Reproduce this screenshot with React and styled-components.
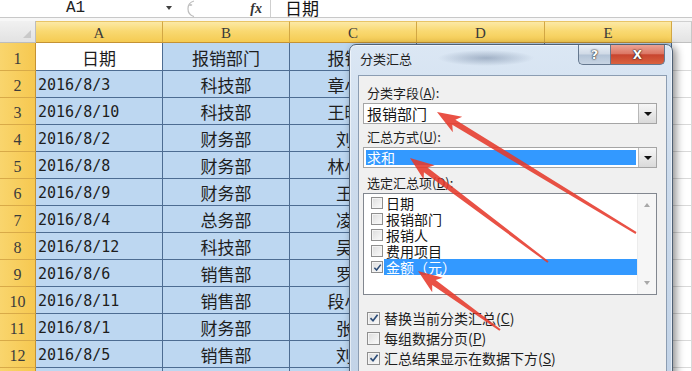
import React from 'react';
import styled, { createGlobalStyle } from 'styled-components';

const CJK = `"Noto Sans CJK SC", "Noto Sans", sans-serif`;

const GlobalStyle = createGlobalStyle`
  html, body { margin: 0; padding: 0; background: #fff; }
  body { width: 692px; height: 371px; overflow: hidden; font-family: ${CJK}; }
  * { box-sizing: border-box; }
`;

const Page = styled.div`
  position: relative;
  width: 692px;
  height: 371px;
  overflow: hidden;
  background: #fff;
  display: flex;
  flex-direction: column;
`;

/* ---------- formula bar ---------- */
const FormulaBar = styled.div`
  height: 18px;
  flex-shrink: 0;
  display: flex;
  align-items: center;
  border-bottom: 1px solid #c8c8c8;
`;
const NameBox = styled.div`
  width: 166px;
  padding-left: 66px;
  font-family: "Liberation Mono", monospace;
  font-size: 16px;
  line-height: 17px;
  color: #222;
`;
const DropTri = styled.div`
  width: 0;
  height: 0;
  border-left: 3px solid transparent;
  border-right: 3px solid transparent;
  border-top: 4px solid #404040;
  margin-top: -2px;
`;
const BarButtons = styled.div`
  width: 98px;
  height: 17px;
  display: flex;
  align-items: center;
  padding-left: 9px;
  padding-right: 8px;
`;
const Fx = styled.span`
  margin-left: auto;
  font-family: "Liberation Serif", serif;
  font-style: italic;
  font-weight: bold;
  font-size: 14px;
  color: #333;
  line-height: 17px;
`;
const FormulaInput = styled.div`
  flex: 1;
  height: 17px;
  border-left: 1px solid #cfcfcf;
  padding-left: 14px;
  font-family: ${CJK};
  font-size: 17px;
  line-height: 16px;
  color: #151515;
`;
const BarGap = styled.div`
  height: 3px;
  flex-shrink: 0;
  background: #f7f7f7;
`;

/* ---------- sheet ---------- */
const Sheet = styled.div`
  display: grid;
  grid-template-columns: 36px 127px 127px 127px 128px 127px 1fr;
  grid-template-rows: 22px 28px repeat(12, 27px);
`;
const Corner = styled.div`
  position: relative;
  background: linear-gradient(#f1f1f1, #e2e2e2);
  border-right: 1px solid #bdbdbd;
  border-bottom: 1px solid #bdbdbd;
  &::after {
    content: '';
    position: absolute;
    right: 4px;
    bottom: 4px;
    border-left: 8px solid transparent;
    border-bottom: 8px solid #c9c9c9;
  }
`;
const ColHeader = styled.div`
  display: flex;
  align-items: center;
  justify-content: center;
  background: ${(p) => (p.$plain ? 'linear-gradient(#f4f4f4, #e3e3e3)' : 'linear-gradient(#fce9a6 0%, #f9d972 45%, #f5cb52 100%)')};
  border-top: 1px solid ${(p) => (p.$plain ? '#d0d0d0' : '#e8c467')};
  border-right: 1px solid ${(p) => (p.$plain ? '#c8c8c8' : '#d2a744')};
  border-bottom: 1px solid ${(p) => (p.$plain ? '#c0c0c0' : '#c49234')};
  font-family: "Liberation Serif", serif;
  font-size: 15px;
  color: #3a3a3a;
  padding-top: 2px;
`;
const RowHeader = styled.div`
  display: flex;
  align-items: flex-end;
  justify-content: center;
  background: linear-gradient(90deg, #f9d56d, #f6c850);
  border-right: 1px solid #c49234;
  border-bottom: 1px solid #d8aa48;
  font-family: "Liberation Serif", serif;
  font-size: 16px;
  line-height: 20px;
  color: #3c3c3c;
  padding-bottom: 1px;
`;
const Cell = styled.div`
  display: flex;
  align-items: flex-end;
  justify-content: ${(p) => (p.$left ? 'flex-start' : 'center')};
  padding: 0 2px 1px;
  overflow: hidden;
  white-space: nowrap;
  background: ${(p) => (p.$active ? '#ffffff' : p.$plain ? '#ffffff' : '#bdd7f1')};
  border-right: 1px solid ${(p) => (p.$plain ? '#d9d9d9' : '#4d6c92')};
  border-bottom: 1px solid ${(p) => (p.$plain ? '#d9d9d9' : '#4d6c92')};
  font-family: ${(p) => (p.$mono ? '"DejaVu Sans Mono", monospace' : CJK)};
  font-size: ${(p) => (p.$mono ? '15px' : '17px')};
  line-height: 22px;
  color: #1e1e1e;
`;

/* ---------- dialog ---------- */
const Dialog = styled.div`
  position: absolute;
  left: 349px;
  top: 44px;
  width: 324px;
  height: 340px;
  border: 1px solid #4f6074;
  border-radius: 7px 7px 0 0;
  background: linear-gradient(180deg, #dbe7f4 0%, #ccdbec 40%, #c2d3e7 100%);
  box-shadow: 3px 2px 9px rgba(0, 0, 0, 0.45), inset 0 0 0 1px rgba(255, 255, 255, 0.55);
  padding: 0 5px 0 8px;
  display: flex;
  flex-direction: column;
  z-index: 2;
`;
const TitleBar = styled.div`
  height: 30px;
  flex-shrink: 0;
  display: flex;
  align-items: flex-start;
  background: radial-gradient(ellipse 48px 8px at 128px 13px, rgba(70, 92, 125, 0.38), rgba(70, 92, 125, 0) 100%);
`;
const Title = styled.span`
  padding: 6px 0 0 2px;
  font-size: 13px;
  line-height: 16px;
  color: #1e1e1e;
`;
const CaptionButton = styled.div`
  height: 20px;
  display: flex;
  align-items: center;
  justify-content: center;
  border: 1px solid ${(p) => (p.$close ? '#7e2e22' : '#65788f')};
  border-top: none;
  font-family: "DejaVu Sans", sans-serif;
  font-weight: bold;
  color: #fff;
  text-shadow: 0 0 2px #222, 0 0 1px #000;
`;
const HelpButton = styled(CaptionButton)`
  margin-left: auto;
  width: 32px;
  border-right: none;
  border-radius: 0 0 0 5px;
  background: linear-gradient(180deg, #eaf0f7 0%, #cfd9e6 48%, #b3c3d6 52%, #c8d5e4 100%);
  font-size: 13px;
`;
const CloseButton = styled(CaptionButton)`
  width: 55px;
  margin-right: 2px;
  border-radius: 0 0 5px 0;
  background: linear-gradient(180deg, #eca394 0%, #dc7866 45%, #c8452f 52%, #d9623f 100%);
  font-size: 12px;
`;
const Client = styled.div`
  flex: 1;
  background: #f0f0f0;
  border: 1px solid #8c9db2;
  border-bottom: none;
  display: flex;
  flex-direction: column;
`;
const Label = styled.div`
  margin-top: ${(p) => p.$mt}px;
  padding-left: 8px;
  font-size: 13px;
  line-height: 15px;
  color: #1e1e1e;
  u { text-decoration: underline; }
`;
const Select = styled.div`
  margin: 3px 0 0 4px;
  width: 294px;
  height: 21px;
  border: 1px solid #a5a5a5;
  background: #fff;
  display: flex;
`;
const SelectValue = styled.div`
  flex: 1;
  margin: ${(p) => (p.$hl ? '2px' : '0')};
  padding-left: ${(p) => (p.$hl ? '1px' : '3px')};
  background: ${(p) => (p.$hl ? '#3399ff' : 'transparent')};
  color: ${(p) => (p.$hl ? '#fff' : '#151515')};
  font-size: ${(p) => (p.$hl ? '14px' : '15px')};
  line-height: ${(p) => (p.$hl ? '15px' : '19px')};
`;
const DropButton = styled.div`
  width: 18px;
  border-left: 1px solid #b8b8b8;
  background: linear-gradient(#f6f6f6, #dadada);
  display: flex;
  align-items: center;
  justify-content: center;
  &::after {
    content: '';
    border-left: 4px solid transparent;
    border-right: 4px solid transparent;
    border-top: 4px solid #111;
  }
`;
const ListBox = styled.div`
  margin: 3px 0 0 4px;
  width: 294px;
  height: 102px;
  border: 1px solid #82878f;
  background: #fff;
  display: flex;
`;
const ListItems = styled.div`
  flex: 1;
  padding-top: 1px;
`;
const ListItem = styled.div`
  height: 16px;
  display: flex;
  align-items: center;
  padding-left: 7px;
`;
const ItemText = styled.span`
  flex: 1;
  margin-left: 1px;
  padding-left: 2px;
  font-size: 14px;
  line-height: 16px;
  background: ${(p) => (p.$hl ? '#3399ff' : 'transparent')};
  color: ${(p) => (p.$hl ? '#fff' : '#151515')};
`;
const ScrollBar = styled.div`
  width: 19px;
  background: #f6f6f6;
  border-left: 1px solid #ececec;
  display: flex;
  flex-direction: column;
  justify-content: space-between;
  align-items: center;
  padding: 9px 0 9px;
`;
const ScrollArrow = styled.div`
  border-left: 3px solid transparent;
  border-right: 3px solid transparent;
  ${(p) => (p.$up ? 'border-bottom: 4px solid #a8a8a8;' : 'border-top: 4px solid #a8a8a8;')}
`;
const Options = styled.div`
  margin-top: 13px;
  display: flex;
  flex-direction: column;
`;
const CheckRow = styled.div`
  height: 20px;
  display: flex;
  align-items: center;
  padding-left: 8px;
  gap: 4px;
  font-size: 14px;
  color: #1e1e1e;
  u { text-decoration: underline; }
`;
const Box = styled.span`
  width: ${(p) => p.$size}px;
  height: ${(p) => p.$size}px;
  flex-shrink: 0;
  border: 1px solid #8f8f8f;
  background: linear-gradient(135deg, #dcdcdc, #fbfbfb);
  box-shadow: inset 0 0 0 1px #f4f4f4;
  display: flex;
  align-items: center;
  justify-content: center;
`;

const Arrows = styled.svg`
  position: absolute;
  left: 0;
  top: 0;
  z-index: 3;
  pointer-events: none;
`;

function CheckBox({ checked, size = 13 }) {
  return (
    <Box $size={size}>
      {checked && (
        <svg width={size - 3} height={size - 3} viewBox="0 0 10 10">
          <path d="M1.5 5.2 L4 7.8 L8.6 1.8" fill="none" stroke="#2d4d78" strokeWidth="1.7" />
        </svg>
      )}
    </Box>
  );
}

function arrowPoints(tip, tail, headLen = 24, headHalf = 9, near = 3, far = 1) {
  const [tx, ty] = tip;
  const [ex, ey] = tail;
  const dx = ex - tx;
  const dy = ey - ty;
  const len = Math.hypot(dx, dy);
  const ux = dx / len;
  const uy = dy / len;
  const px = -uy;
  const py = ux;
  const bx = tx + ux * headLen;
  const by = ty + uy * headLen;
  const nx = tx + ux * headLen * 0.82;
  const ny = ty + uy * headLen * 0.82;
  const pts = [
    [tx, ty],
    [bx + px * headHalf, by + py * headHalf],
    [nx + px * near, ny + py * near],
    [ex + px * far, ey + py * far],
    [ex - px * far, ey - py * far],
    [nx - px * near, ny - py * near],
    [bx - px * headHalf, by - py * headHalf],
  ];
  return pts.map((p) => p.map((v) => v.toFixed(1)).join(',')).join(' ');
}

const header = ['日期', '报销部门', '报销人', '费用项目', '金额（元）'];
const rows = [
  ['2016/8/3', '科技部', '章小明', '办公用品', '350'],
  ['2016/8/10', '科技部', '王晓东', '差旅费', '1200'],
  ['2016/8/2', '财务部', '刘伟', '招待费', '800'],
  ['2016/8/8', '财务部', '林小玲', '办公用品', '260'],
  ['2016/8/9', '财务部', '王芳', '差旅费', '980'],
  ['2016/8/4', '总务部', '凌云', '交通费', '150'],
  ['2016/8/12', '科技部', '吴强', '招待费', '600'],
  ['2016/8/6', '销售部', '罗兰', '差旅费', '1500'],
  ['2016/8/11', '销售部', '段小军', '交通费', '220'],
  ['2016/8/1', '财务部', '张华', '办公用品', '180'],
  ['2016/8/5', '销售部', '刘洋', '招待费', '900'],
  ['2016/8/7', '总务部', '李明', '交通费', '120'],
];
const fields = ['日期', '报销部门', '报销人', '费用项目', '金额（元）'];

export default function App() {
  return (
    <Page>
      <GlobalStyle />
      <FormulaBar>
        <NameBox>A1</NameBox>
        <DropTri />
        <BarButtons>
          <svg width="16" height="17" viewBox="0 0 16 17">
            <path d="M13 1 A 8 8 0 0 0 13 16.5" fill="none" stroke="#bdbdbd" strokeWidth="1.2" />
            <ellipse cx="9.5" cy="5" rx="1.8" ry="1" fill="#c4c4c4" />
          </svg>
          <Fx>fx</Fx>
        </BarButtons>
        <FormulaInput>日期</FormulaInput>
      </FormulaBar>
      <BarGap />
      <Sheet>
        <Corner />
        {['A', 'B', 'C', 'D', 'E'].map((c) => (
          <ColHeader key={c}>{c}</ColHeader>
        ))}
        <ColHeader $plain />

        <RowHeader>1</RowHeader>
        {header.map((h, i) => (
          <Cell key={h} $active={i === 0}>{h}</Cell>
        ))}
        <Cell $plain />

        {rows.map((r, ri) => (
          <React.Fragment key={ri}>
            <RowHeader>{ri + 2}</RowHeader>
            <Cell $left $mono>{r[0]}</Cell>
            <Cell>{r[1]}</Cell>
            <Cell>{r[2]}</Cell>
            <Cell>{r[3]}</Cell>
            <Cell>{r[4]}</Cell>
            <Cell $plain />
          </React.Fragment>
        ))}
      </Sheet>

      <Dialog>
        <TitleBar>
          <Title>分类汇总</Title>
          <HelpButton>?</HelpButton>
          <CloseButton>X</CloseButton>
        </TitleBar>
        <Client>
          <Label $mt={9}>分类字段(<u>A</u>):</Label>
          <Select>
            <SelectValue>报销部门</SelectValue>
            <DropButton />
          </Select>
          <Label $mt={5}>汇总方式(<u>U</u>):</Label>
          <Select>
            <SelectValue $hl>求和</SelectValue>
            <DropButton />
          </Select>
          <Label $mt={7}>选定汇总项(<u>D</u>):</Label>
          <ListBox>
            <ListItems>
              {fields.map((f, i) => (
                <ListItem key={f}>
                  <CheckBox size={12} checked={i === 4} />
                  <ItemText $hl={i === 4}>{f}</ItemText>
                </ListItem>
              ))}
            </ListItems>
            <ScrollBar>
              <ScrollArrow $up />
              <ScrollArrow />
            </ScrollBar>
          </ListBox>
          <Options>
            <CheckRow>
              <CheckBox checked />
              <span>替换当前分类汇总(<u>C</u>)</span>
            </CheckRow>
            <CheckRow>
              <CheckBox />
              <span>每组数据分页(<u>P</u>)</span>
            </CheckRow>
            <CheckRow>
              <CheckBox checked />
              <span>汇总结果显示在数据下方(<u>S</u>)</span>
            </CheckRow>
          </Options>
        </Client>
      </Dialog>

      <Arrows width="692" height="371" viewBox="0 0 692 371">
        <g fill="#e63a2c" opacity="0.88">
          <polygon points={arrowPoints([437, 112], [636, 233])} />
          <polygon points={arrowPoints([410, 158], [548, 262])} />
          <polygon points={arrowPoints([418, 271], [500, 330])} />
        </g>
      </Arrows>
    </Page>
  );
}
